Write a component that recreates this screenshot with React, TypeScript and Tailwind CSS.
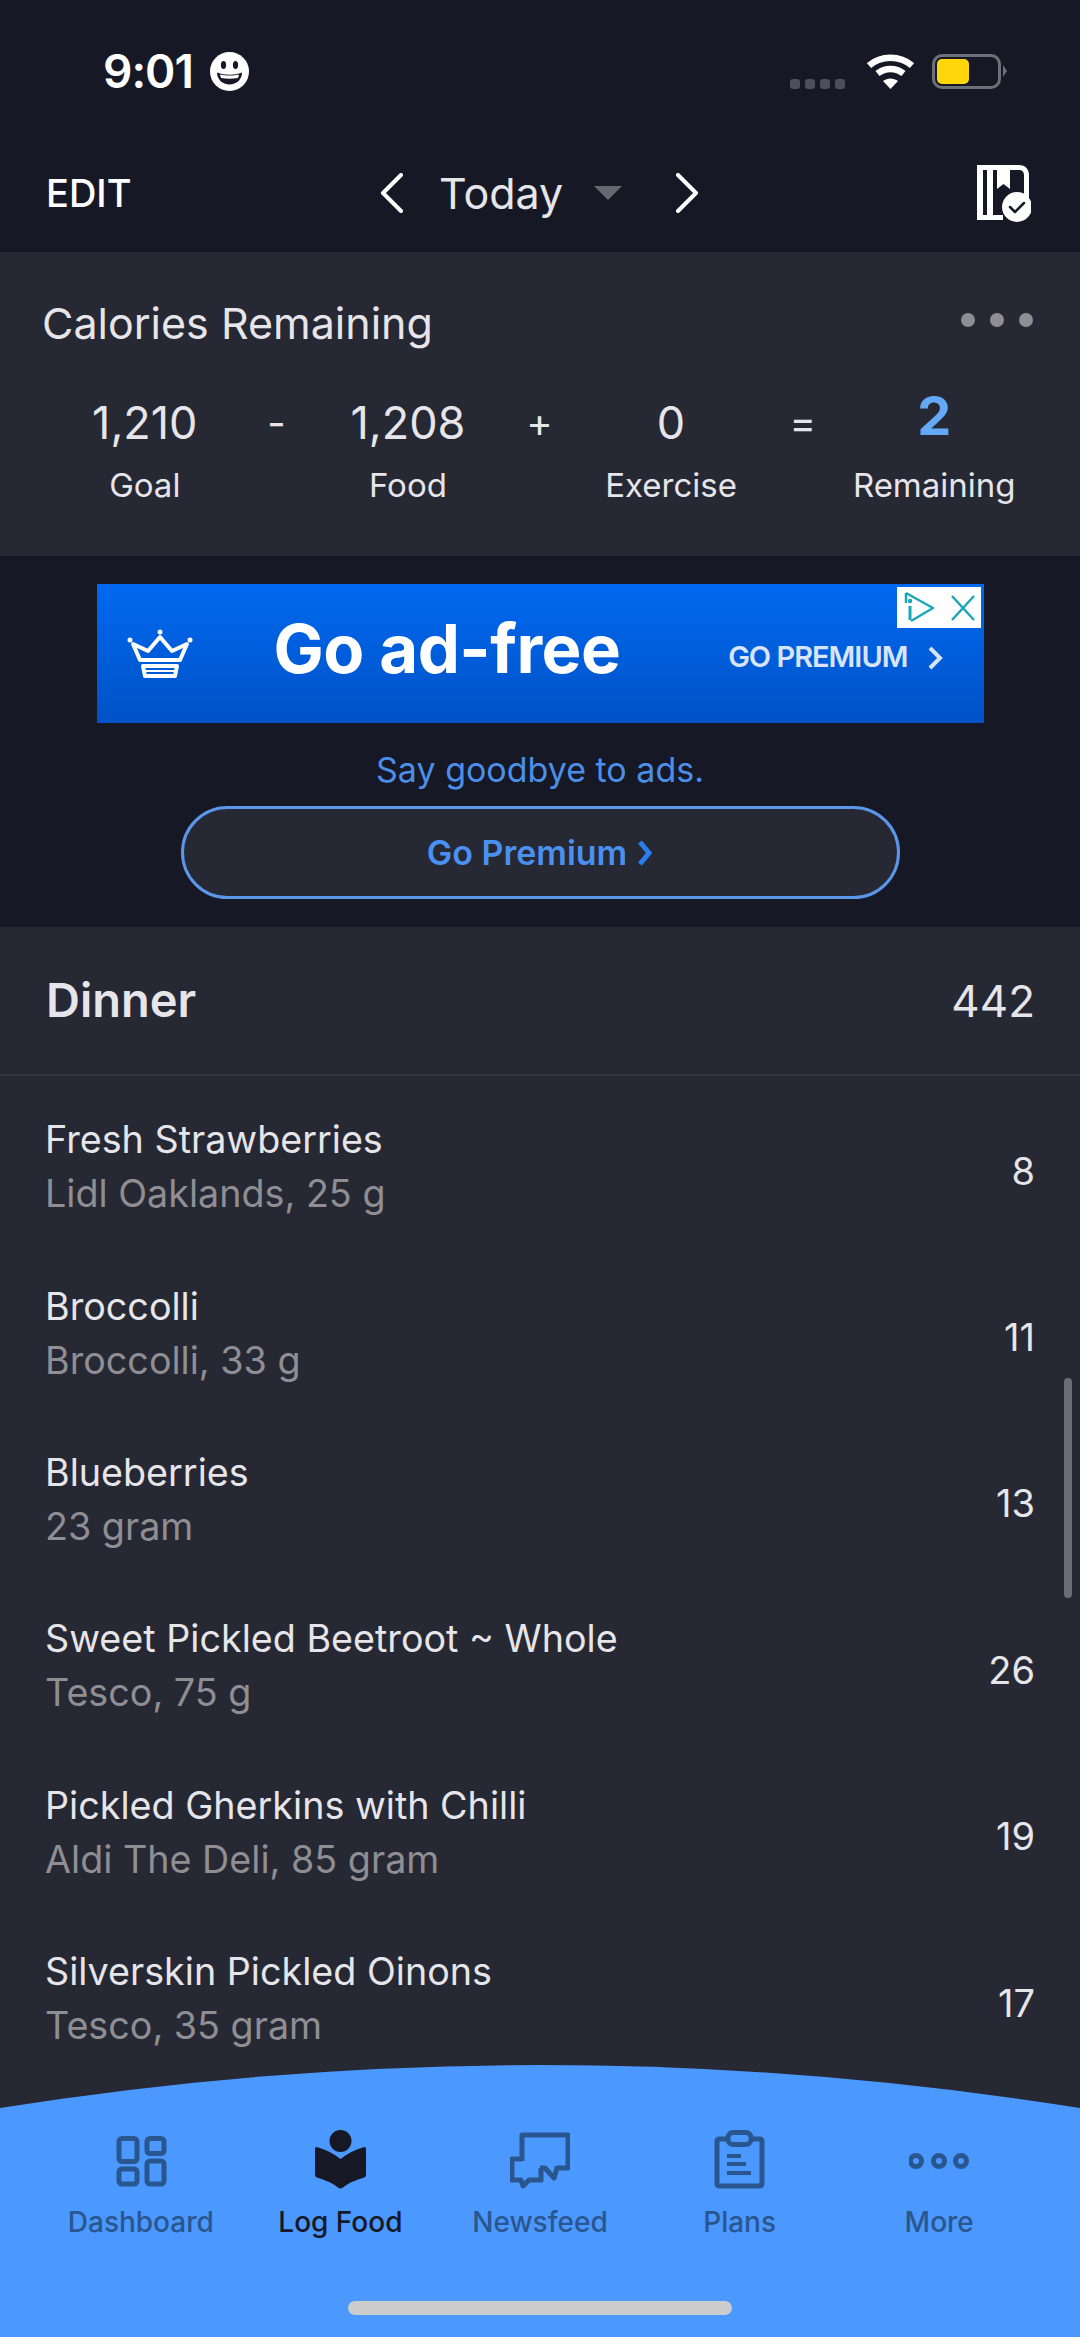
const foods = [
  { name: "Fresh Strawberries", sub: "Lidl Oaklands, 25 g", cal: 8 },
  { name: "Broccolli", sub: "Broccolli, 33 g", cal: 11 },
  { name: "Blueberries", sub: "23 gram", cal: 13 },
  { name: "Sweet Pickled Beetroot ~ Whole", sub: "Tesco, 75 g", cal: 26 },
  { name: "Pickled Gherkins with Chilli", sub: "Aldi The Deli, 85 gram", cal: 19 },
  { name: "Silverskin Pickled Oinons", sub: "Tesco, 35 gram", cal: 17 },
];

const stats = [
  { value: "1,210", label: "Goal" },
  { op: "-" },
  { value: "1,208", label: "Food" },
  { op: "+" },
  { value: "0", label: "Exercise" },
  { op: "=" },
  { value: "2", label: "Remaining", highlight: true },
];

function Smiley() {
  return (
    <svg width="39" height="39" viewBox="0 0 39 39" className="ml-[17px]">
      <circle cx="19.5" cy="19.5" r="19.5" fill="#fff" />
      <ellipse cx="13.5" cy="13" rx="2.6" ry="4" fill="#161826" />
      <ellipse cx="25.5" cy="13" rx="2.6" ry="4" fill="#161826" />
      <path d="M7 20.500c4 1.600 8 2.200 12.500 2.200s8.500-.6 12.500-2.200c0 7-5.500 12-12.500 12S7 27.500 7 20.500z" fill="#161826" />
      <path d="M10 22.500c3 .8 6 1.100 9.500 1.100s6.500-.3 9.500-1.100c-.2 1.500-.6 2.600-1.200 3.500-2.600.6-5.300.8-8.300.8s-5.700-.2-8.300-.8c-.6-.9-1-2-1.200-3.500z" fill="#fff" />
    </svg>
  );
}

function Wifi() {
  return (
    <svg width="47" height="35" viewBox="0 0 47 35">
      <path d="M2 11.500C14 1 33 1 45 11.500" fill="none" stroke="#fff" strokeWidth="6.500" />
      <path d="M10.500 19.500c7.500-6 18.500-6 26 0" fill="none" stroke="#fff" strokeWidth="6.500" />
      <path d="M16 27c4.500-3.500 10.500-3.500 15 0l-7.500 8z" fill="#fff" />
    </svg>
  );
}

function Battery() {
  return (
    <div className="flex items-center">
      <div className="w-[69px] h-[35px] rounded-[10px] border-[3px] border-[#6e7078] p-[2px]">
        <div className="w-[32px] h-full rounded-[5px] bg-[#ffd60a]" />
      </div>
      <div className="ml-[2px] w-0 h-0 border-y-[6px] border-y-transparent border-l-[4px] border-l-[#6e7078]" />
    </div>
  );
}

function BookCheck() {
  return (
    <svg width="54" height="57" viewBox="0 0 54 57">
      <path
        d="M0 0h42c6 0 10 4 10 10v28h-5V10c0-3-2-5-5-5h-9v19l-6.500-5-6.500 5V5h-4v45h10v5H0zM6 5v45h4V5z"
        fill="#fff"
        fillRule="evenodd"
      />
      <circle cx="40" cy="42" r="15" fill="#fff" />
      <path d="M33 42l5 5 9-9" fill="none" stroke="#161826" strokeWidth="2.500" strokeLinecap="round" strokeLinejoin="round" />
    </svg>
  );
}

function Crown() {
  return (
    <svg width="66" height="50" viewBox="0 0 66 50" fill="none" stroke="#fff" strokeWidth="4" strokeLinejoin="round">
      <path d="M13 31L6 15l15 7L33 8l12 14 15-7-7 16z" />
      <path d="M16 37h34l-2 10H18z" />
      <path d="M17 42h32" strokeWidth="2" />
      <circle cx="33" cy="3" r="2.500" fill="#fff" stroke="none" />
      <circle cx="3" cy="11" r="2.500" fill="#fff" stroke="none" />
      <circle cx="63" cy="11" r="2.500" fill="#fff" stroke="none" />
    </svg>
  );
}

function AdCorner() {
  return (
    <div className="absolute top-[3px] right-[3px] w-[84px] h-[41px] bg-white flex items-center justify-between px-[5px]">
      <svg width="34" height="34" viewBox="0 0 34 34" fill="none" stroke="#1aa7b8" strokeWidth="2.500" strokeLinejoin="round">
        <path d="M4 2l27 15L9 30" />
        <path d="M4 2v10" />
        <path d="M8 15v14" strokeWidth="3" />
        <circle cx="8" cy="10" r="1" fill="#1aa7b8" />
      </svg>
      <svg width="26" height="28" viewBox="0 0 26 28" fill="none" stroke="#1aa7b8" strokeWidth="2.500">
        <path d="M2 2l22 24M24 2L2 26" />
      </svg>
    </div>
  );
}

function DashboardIcon() {
  return (
    <svg width="60" height="60" viewBox="0 0 60 60" fill="none" stroke="currentColor" strokeWidth="5">
      <rect x="8" y="8.500" width="18" height="23" rx="3" />
      <rect x="36" y="8.500" width="17" height="15" rx="3" />
      <rect x="8" y="39" width="18" height="15" rx="3" />
      <rect x="36" y="31" width="17" height="23" rx="3" />
    </svg>
  );
}

function LogFoodIcon() {
  return (
    <svg width="60" height="60" viewBox="0 0 60 60" fill="currentColor">
      <circle cx="30.500" cy="11" r="11" />
      <path d="M5 19c0-1.500 1.200-2.300 2.500-1.800 9 2.800 17 6.800 23 11.800 6-5 14-9 23-11.800 1.300-.5 2.500.3 2.500 1.800v26c0 1.200-.7 2-1.800 2.400C46 50 38 53 33 57.500c-1.500 1.300-3.500 1.300-5 0C23 53 15 50 6.800 47.400 5.700 47 5 46.200 5 45z" />
    </svg>
  );
}

function NewsfeedIcon() {
  return (
    <svg width="60" height="60" viewBox="0 0 60 60" fill="none" stroke="currentColor" strokeWidth="5" strokeLinejoin="round">
      <path d="M12 31V5h46v33H47l-3 10-9-10h-5" />
      <path d="M12 29H2v21h9l2 6 6-6h12V38" />
    </svg>
  );
}

function PlansIcon() {
  return (
    <svg width="60" height="60" viewBox="0 0 60 60" fill="none" stroke="currentColor" strokeWidth="5" strokeLinejoin="round">
      <path d="M18 9H9a2 2 0 0 0-2 2v43a2 2 0 0 0 2 2h41a2 2 0 0 0 2-2V11a2 2 0 0 0-2-2h-9" />
      <rect x="18" y="2.500" width="23" height="12" rx="5" />
      <path d="M17 26h14M17 34h19M17 43h24" strokeWidth="4" />
    </svg>
  );
}

function MoreIcon() {
  return (
    <svg width="60" height="60" viewBox="0 0 60 60" fill="none" stroke="currentColor" strokeWidth="5">
      <circle cx="7" cy="31" r="5.500" />
      <circle cx="30" cy="31" r="5.500" />
      <circle cx="52" cy="31" r="5.500" />
    </svg>
  );
}

const tabs = [
  { label: "Dashboard", icon: <DashboardIcon /> },
  { label: "Log Food", icon: <LogFoodIcon />, active: true },
  { label: "Newsfeed", icon: <NewsfeedIcon /> },
  { label: "Plans", icon: <PlansIcon /> },
  { label: "More", icon: <MoreIcon /> },
];

export default function App() {
  return (
    <div className="w-[1080px] h-[2337px] overflow-hidden flex flex-col bg-[#161826] font-['Inter',sans-serif] text-[#e5e5ea]">
      {/* status bar */}
      <div className="h-[142px] shrink-0 flex justify-between items-center pl-[103px] pr-[73px]">
        <div className="flex items-center">
          <span className="text-[46px] font-semibold text-white tracking-[-1px]">9:01</span>
          <Smiley />
        </div>
        <div className="flex items-end">
          <div className="flex gap-[5px] mr-[22px]">
            <div className="w-[10px] h-[10px] rounded-[3px] bg-[#4d4f5a]" />
            <div className="w-[10px] h-[10px] rounded-[3px] bg-[#4d4f5a]" />
            <div className="w-[10px] h-[10px] rounded-[3px] bg-[#4d4f5a]" />
            <div className="w-[10px] h-[10px] rounded-[3px] bg-[#4d4f5a]" />
          </div>
          <Wifi />
          <div className="ml-[18px]">
            <Battery />
          </div>
        </div>
      </div>

      {/* nav */}
      <div className="h-[110px] shrink-0 flex items-center pb-[8px]">
        <div className="w-[380px] pl-[46px] text-[38px] font-medium text-white">EDIT</div>
        <div className="w-[319px] flex items-center">
          <svg width="23" height="40" viewBox="0 0 23 40" fill="none" stroke="#fff" strokeWidth="4" strokeLinecap="round" strokeLinejoin="round">
            <path d="M21 2L3 20l18 18" />
          </svg>
          <span className="text-[43px] ml-[36px]">Today</span>
          <div className="w-0 h-0 border-x-[14px] border-x-transparent border-t-[14px] border-t-[#666870] ml-[31px]" />
          <svg width="23" height="40" viewBox="0 0 23 40" fill="none" stroke="#fff" strokeWidth="4" strokeLinecap="round" strokeLinejoin="round" className="ml-auto">
            <path d="M2 2l18 18L2 38" />
          </svg>
        </div>
        <div className="flex-1 flex justify-end pr-[49px]">
          <BookCheck />
        </div>
      </div>

      {/* calories */}
      <div className="h-[304px] shrink-0 bg-[#262833]">
        <div className="flex items-center justify-between pl-[42px] pr-[47px] pt-[46px]">
          <span className="text-[43px] leading-[50px]">Calories Remaining</span>
          <div className="flex gap-[15px] mb-[7px]">
            <div className="w-[14px] h-[14px] rounded-full bg-[#8e8e93]" />
            <div className="w-[14px] h-[14px] rounded-full bg-[#8e8e93]" />
            <div className="w-[14px] h-[14px] rounded-full bg-[#8e8e93]" />
          </div>
        </div>
        <div className="grid grid-cols-7 pl-[79px] pr-[80px] mt-[47px]">
          {stats.map((s, i) =>
            s.op ? (
              <div key={i} className="text-center text-[40px] leading-[56px] h-[56px]">
                {s.op}
              </div>
            ) : (
              <div key={i} className="flex flex-col items-center whitespace-nowrap">
                {s.highlight ? (
                  <span className="h-[56px] text-[54px] leading-[42px] font-bold text-[#64a9f5]">{s.value}</span>
                ) : (
                  <span className="h-[56px] text-[45px] leading-[56px]">{s.value}</span>
                )}
                <span className="text-[33px] leading-[40px] mt-[14px]">{s.label}</span>
              </div>
            ),
          )}
        </div>
      </div>

      {/* ad */}
      <div className="h-[371px] shrink-0 flex flex-col items-center pt-[28px]">
        <div className="relative w-[887px] h-[139px] bg-gradient-to-b from-[#0069f0] to-[#0052c6] flex items-center pl-[30px] pr-[41px]">
          <Crown />
          <span className="ml-[81px] mb-[8px] text-[67px] font-bold text-white tracking-[-0.5px]">Go ad-free</span>
          <span className="ml-auto text-[29px] font-semibold text-[#d8e4fb] tracking-[-1px] mt-[6px]">GO PREMIUM</span>
          <svg width="15" height="24" viewBox="0 0 15 24" fill="none" stroke="#d8e4fb" strokeWidth="4" className="ml-[20px] mt-[8px]">
            <path d="M2 2l10 10L2 22" />
          </svg>
          <AdCorner />
        </div>
        <div className="text-[34px] leading-[40px] mt-[27px] text-[#4c8fe8]">Say goodbye to ads.</div>
        <div className="mt-[16px] w-[719px] h-[93px] rounded-full border-[3px] border-[#5b97e8] bg-[#262833] flex items-center justify-center text-[34px] font-semibold text-[#4a90f0]">
          Go Premium
          <svg width="16" height="26" viewBox="0 0 16 26" fill="none" stroke="#2a7fee" strokeWidth="5" className="ml-[10px]">
            <path d="M3 2l9 11L3 24" />
          </svg>
        </div>
      </div>

      {/* dinner */}
      <div className="h-[149px] shrink-0 bg-[#262833] border-b-2 border-[#33353f] flex items-center justify-between pl-[46px] pr-[45px]">
        <span className="text-[47px] font-semibold">Dinner</span>
        <span className="text-[44px]">442</span>
      </div>

      {/* list */}
      <div className="relative flex-1 min-h-0 bg-[#262833] overflow-hidden pt-[7px]">
        {foods.map((f) => (
          <div key={f.name} className="h-[166.400px] flex items-center justify-between pl-[45px] pr-[45px]">
            <div>
              <div className="text-[37.700px] leading-[54px]">{f.name}</div>
              <div className="text-[37.700px] leading-[54px] text-[#8e8e93]">{f.sub}</div>
            </div>
            <span className="text-[38px] mt-[10px]">{f.cal}</span>
          </div>
        ))}
        <div className="absolute right-[8px] top-[302px] w-[8px] h-[220px] rounded-full bg-[#6b6d75]" />
      </div>

      {/* tab bar */}
      <div className="shrink-0 h-[272px] relative -mt-[43px]">
        <svg width="1080" height="43" viewBox="0 0 1080 43" className="absolute left-0 top-0 block">
          <path d="M0 43Q540 -43 1080 43Z" fill="#4b98fe" />
        </svg>
        <div className="mt-[43px] h-[229px] bg-[#4b98fe] flex flex-col items-center">
          <div className="w-full grid grid-cols-5 px-[41px] pt-[22px]">
            {tabs.map((t) => (
              <div
                key={t.label}
                className={`flex flex-col items-center ${t.active ? "text-[#161826]" : "text-[#2a5690]"}`}
              >
                {t.icon}
                <span className="text-[28px] leading-[34px] mt-[15px] font-medium">{t.label}</span>
              </div>
            ))}
          </div>
          <div className="mt-[62px] w-[384px] h-[14px] rounded-full bg-[#cccccc]" />
        </div>
      </div>
    </div>
  );
}
